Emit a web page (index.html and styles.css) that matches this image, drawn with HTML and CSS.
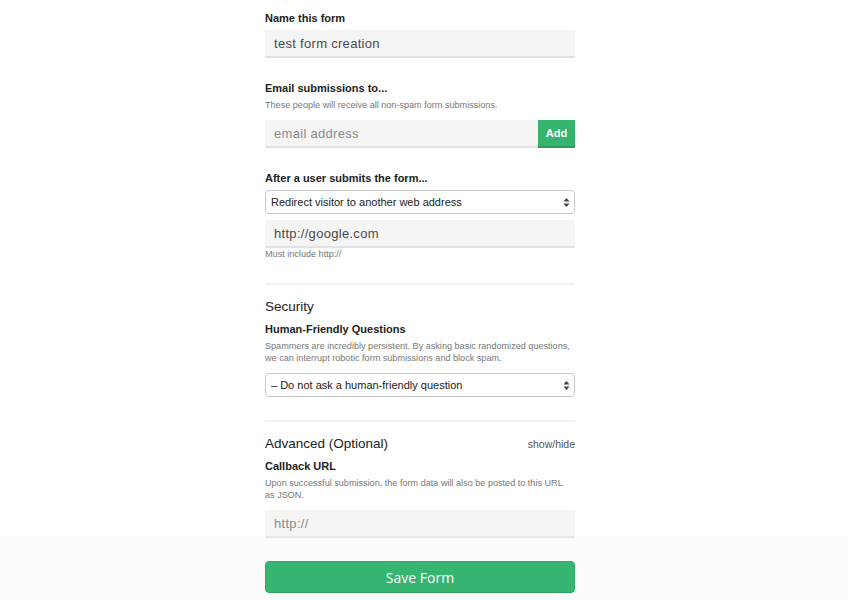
FILE: index.html
```html
<!DOCTYPE html>
<html lang="en">
<head>
    <meta charset="UTF-8">
    <meta name="viewport" content="width=device-width, initial-scale=1.0">
    <title>Form settings</title>
    <link rel="stylesheet" href="styles.css">
</head>
<body>
    <form class="settings">
        <div class="field">
            <label class="label" for="formName">Name this form</label>
            <input class="text-input" type="text" id="formName" value="test form creation">
        </div>

        <div class="field">
            <label class="label" for="email">Email submissions to...</label>
            <p class="help">These people will receive all non-spam form submissions.</p>
            <div class="add-row">
                <input class="text-input" type="text" id="email" placeholder="email address">
                <button class="add-btn" type="button">Add</button>
            </div>
        </div>

        <div class="field">
            <label class="label" for="after">After a user submits the form...</label>
            <div class="select-wrap">
                <select id="after" class="select">
                    <option>Redirect visitor to another web address</option>
                </select>
                <svg class="arrows" width="7" height="11" viewBox="0 0 7 11"><path d="M3.5 1 L6.5 4.5 H0.5 Z M3.5 10 L6.5 6.5 H0.5 Z" fill="#444"/></svg>
            </div>
            <input class="text-input url" type="text" value="http://google.com">
            <p class="help">Must include http://</p>
        </div>

        <hr class="divider">

        <h2 class="section-title">Security</h2>
        <div class="field">
            <label class="label" for="question">Human-Friendly Questions</label>
            <p class="help">Spammers are incredibly persistent. By asking basic randomized questions, we can interrupt robotic form submissions and block spam.</p>
            <div class="select-wrap">
                <select id="question" class="select">
                    <option>– Do not ask a human-friendly question</option>
                </select>
                <svg class="arrows" width="7" height="11" viewBox="0 0 7 11"><path d="M3.5 1 L6.5 4.5 H0.5 Z M3.5 10 L6.5 6.5 H0.5 Z" fill="#444"/></svg>
            </div>
        </div>

        <hr class="divider">

        <div class="section-head">
            <h2 class="section-title">Advanced (Optional)</h2>
            <a class="toggle" href="#">show/hide</a>
        </div>
        <div class="field last">
            <label class="label" for="callback">Callback URL</label>
            <p class="help">Upon successful submission, the form data will also be posted to this URL as JSON.</p>
            <input class="text-input" type="text" id="callback" placeholder="http://">
        </div>
    </form>

    <footer class="save-bar">
        <button class="save-btn" type="button">Save Form</button>
    </footer>
</body>
</html>
```

FILE: styles.css
```css
body {
    margin: 0;
    padding: 0 8px 0 0;
    font-family: 'Liberation Sans', Arial, sans-serif;
    color: #222;
    background: #fff;
}
.settings {
    width: 310px;
    margin: 0 auto;
    padding: 11px 0 80px 0;
}
.field {
    margin-bottom: 23px;
}
.field.last {
    margin-bottom: 0;
}
.label {
    display: block;
    font-size: 11px;
    font-weight: bold;
    line-height: 14px;
    margin-bottom: 5px;
    color: #222;
}
.help {
    font-size: 9.1px;
    line-height: 12px;
    color: #777;
    margin: -1px 0 9px 0;
    padding-right: 4px;
}
.url + .help {
    margin: 0;
}
.text-input {
    display: block;
    width: 100%;
    height: 28px;
    box-sizing: border-box;
    border: none;
    border-bottom: 2px solid #e2e2e2;
    background: #f5f5f5;
    padding: 0 9px;
    font-family: 'Liberation Sans', Arial, sans-serif;
    font-size: 13px;
    letter-spacing: 0.3px;
    color: #4a4a4a;
    outline: none;
}
.text-input::placeholder {
    color: #8a8a8a;
}
.add-row {
    display: flex;
}
.add-btn {
    width: 37px;
    height: 28px;
    flex-shrink: 0;
    border: none;
    border-bottom: 2px solid #2a9c5c;
    background: #35b36f;
    color: #fff;
    font-family: 'Liberation Sans', Arial, sans-serif;
    font-size: 11px;
    font-weight: bold;
    padding: 0;
}
.select-wrap {
    position: relative;
}
.select {
    display: block;
    width: 100%;
    height: 24px;
    box-sizing: border-box;
    appearance: none;
    -webkit-appearance: none;
    background: #fff;
    border: 1px solid #c8c8c8;
    border-radius: 4px;
    padding: 0 5px;
    font-family: 'Liberation Sans', Arial, sans-serif;
    font-size: 11px;
    color: #222;
}
.arrows {
    position: absolute;
    right: 5px;
    top: 7px;
    pointer-events: none;
}
.url {
    margin-top: 6px;
}
.divider {
    border: none;
    border-top: 2px solid #f2f2f2;
    margin: 0 0 13px 0;
}
.section-title {
    font-size: 13.5px;
    font-weight: normal;
    line-height: 18px;
    margin: 0 0 6px 0;
    color: #222;
}
.section-head {
    display: flex;
    justify-content: space-between;
    align-items: baseline;
}
.toggle {
    font-size: 10.5px;
    color: #555;
    text-decoration: none;
}
.save-bar {
    position: fixed;
    left: 0;
    right: 0;
    bottom: 0;
    height: 64px;
    box-sizing: border-box;
    padding: 25px 8px 0 0;
    background: rgba(245, 245, 245, 0.3);
    display: flex;
    justify-content: center;
}
.save-btn {
    width: 310px;
    height: 32px;
    border: 1px solid #2ea862;
    border-radius: 4px;
    background: #35b56f;
    color: #fff;
    font-family: 'Open Sans', sans-serif;
    font-size: 14px;
}
```
